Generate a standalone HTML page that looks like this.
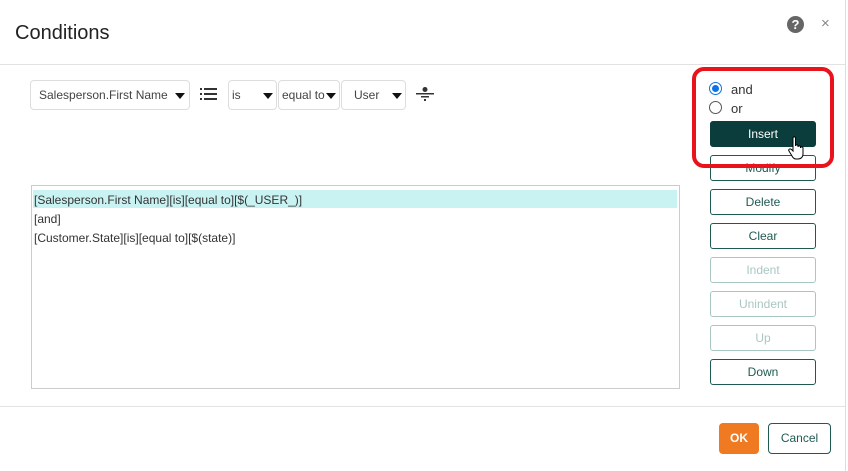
<!DOCTYPE html><html><head><style>
body{margin:0;width:848px;height:471px;background:#fff;font-family:"Liberation Sans",Arial,sans-serif;position:relative;overflow:hidden;color:#333}
.a{position:absolute}
.sel{position:absolute;top:80px;height:30px;border:1px solid #ddd;border-radius:4px;box-sizing:border-box;font-size:12px;color:#444;line-height:29px;padding-left:8px}
.tri{position:absolute;top:12px;width:0;height:0;border-left:5px solid transparent;border-right:5px solid transparent;border-top:6px solid #111}
.btn{position:absolute;left:710px;width:106px;height:26px;box-sizing:border-box;border:1px solid #1f5a52;border-radius:3px;font-size:12px;text-align:center;line-height:25px;color:#1f5a52;background:#fff}
.dis{border-color:#a9c7c2;color:#a9c7c2}
.row{font-size:12px;color:#333;position:absolute;left:34px}
</style></head><body>
<div class="a" style="left:15px;top:22px;font-size:20px;color:#222">Conditions</div>
<div class="a" style="left:787px;top:16px;width:17px;height:17px;border-radius:50%;background:#666;color:#fff;font-size:13px;font-weight:bold;text-align:center;line-height:17px">?</div>
<div class="a" style="left:821px;top:15px;font-size:15px;color:#888">×</div>
<div class="a" style="left:845px;top:0;width:1px;height:471px;background:#ddd"></div>
<div class="a" style="left:0;top:64px;width:845px;height:1px;background:#e2e2e2"></div>
<div class="a" style="left:0;top:406px;width:845px;height:1px;background:#e2e2e2"></div>

<div class="sel" style="left:30px;width:160px">Salesperson.First Name<div class="tri" style="left:144px"></div></div>
<svg class="a" style="left:200px;top:87px" width="17" height="14"><g fill="#333"><rect x="0" y="1" width="2" height="2"/><rect x="4" y="1" width="13" height="2"/><rect x="0" y="6" width="2" height="2"/><rect x="4" y="6" width="13" height="2"/><rect x="0" y="11" width="2" height="2"/><rect x="4" y="11" width="13" height="2"/></g></svg>
<div class="sel" style="left:228px;width:49px;padding-left:3px">is<div class="tri" style="left:34px"></div></div>
<div class="sel" style="left:278px;width:62px;padding-left:3px">equal to<div class="tri" style="left:47px"></div></div>
<div class="sel" style="left:341px;width:65px;padding-left:12px">User<div class="tri" style="left:50px"></div></div>
<svg class="a" style="left:416px;top:85px" width="18" height="18"><g fill="#333"><rect x="0" y="8" width="18" height="1.5"/><circle cx="9" cy="4.5" r="2.5"/><rect x="5" y="11" width="8" height="1.5"/><rect x="8" y="14" width="2" height="2"/></g></svg>

<div class="a" style="left:31px;top:185px;width:647px;height:202px;border:1px solid #ccc"></div>
<div class="a" style="left:33px;top:190px;width:644px;height:18px;background:#c9f2f2"></div>
<div class="row" style="top:193px">[Salesperson.First Name][is][equal to][$(_USER_)]</div>
<div class="row" style="top:212px">[and]</div>
<div class="row" style="top:231px">[Customer.State][is][equal to][$(state)]</div>

<div class="a" style="left:709px;top:82px;width:13px;height:13px;border-radius:50%;border:1px solid #0a74e8;box-sizing:border-box"><div style="margin:2px;width:7px;height:7px;border-radius:50%;background:#0a74e8"></div></div>
<div class="a" style="left:731px;top:82px;font-size:13px">and</div>
<div class="a" style="left:709px;top:101px;width:13px;height:13px;border-radius:50%;border:1px solid #555;box-sizing:border-box"></div>
<div class="a" style="left:731px;top:101px;font-size:13px">or</div>

<div class="btn" style="top:155px">Modify</div>
<div class="btn" style="top:121px;background:#0b3d3d;border-color:#0b3d3d;color:#fff">Insert</div>
<svg class="a" style="left:788px;top:136px" width="18" height="24" viewBox="0 0 18 24"><path d="M5 2c0-1.5 2.5-1.5 2.5 0v8c0-1.5 2.5-1.5 2.5 0v1c0-1.5 2.5-1.5 2.5 0v1c0-1.5 2.5-1.5 2.5 0v6c0 3-2 5-5 5H8c-2 0-3-1-4-3l-3-5c-1-1.5 1-3 2.5-1.5L5 15z" fill="#fff" stroke="#000" stroke-width="1"/></svg>
<div class="a" style="left:692px;top:67px;width:142px;height:101px;border:4px solid #e8131b;border-radius:12px;box-sizing:border-box"></div>
<div class="btn" style="top:189px">Delete</div>
<div class="btn" style="top:223px">Clear</div>
<div class="btn dis" style="top:257px">Indent</div>
<div class="btn dis" style="top:291px">Unindent</div>
<div class="btn dis" style="top:325px">Up</div>
<div class="btn" style="top:359px">Down</div>

<div class="a" style="left:719px;top:423px;width:40px;height:31px;background:#f07a22;border-radius:4px;color:#fff;font-size:12px;font-weight:bold;text-align:center;line-height:31px">OK</div>
<div class="a" style="left:768px;top:423px;width:63px;height:31px;border:1px solid #1f5a52;border-radius:4px;box-sizing:border-box;color:#1f5a52;font-size:12px;text-align:center;line-height:29px">Cancel</div>
</body></html>
